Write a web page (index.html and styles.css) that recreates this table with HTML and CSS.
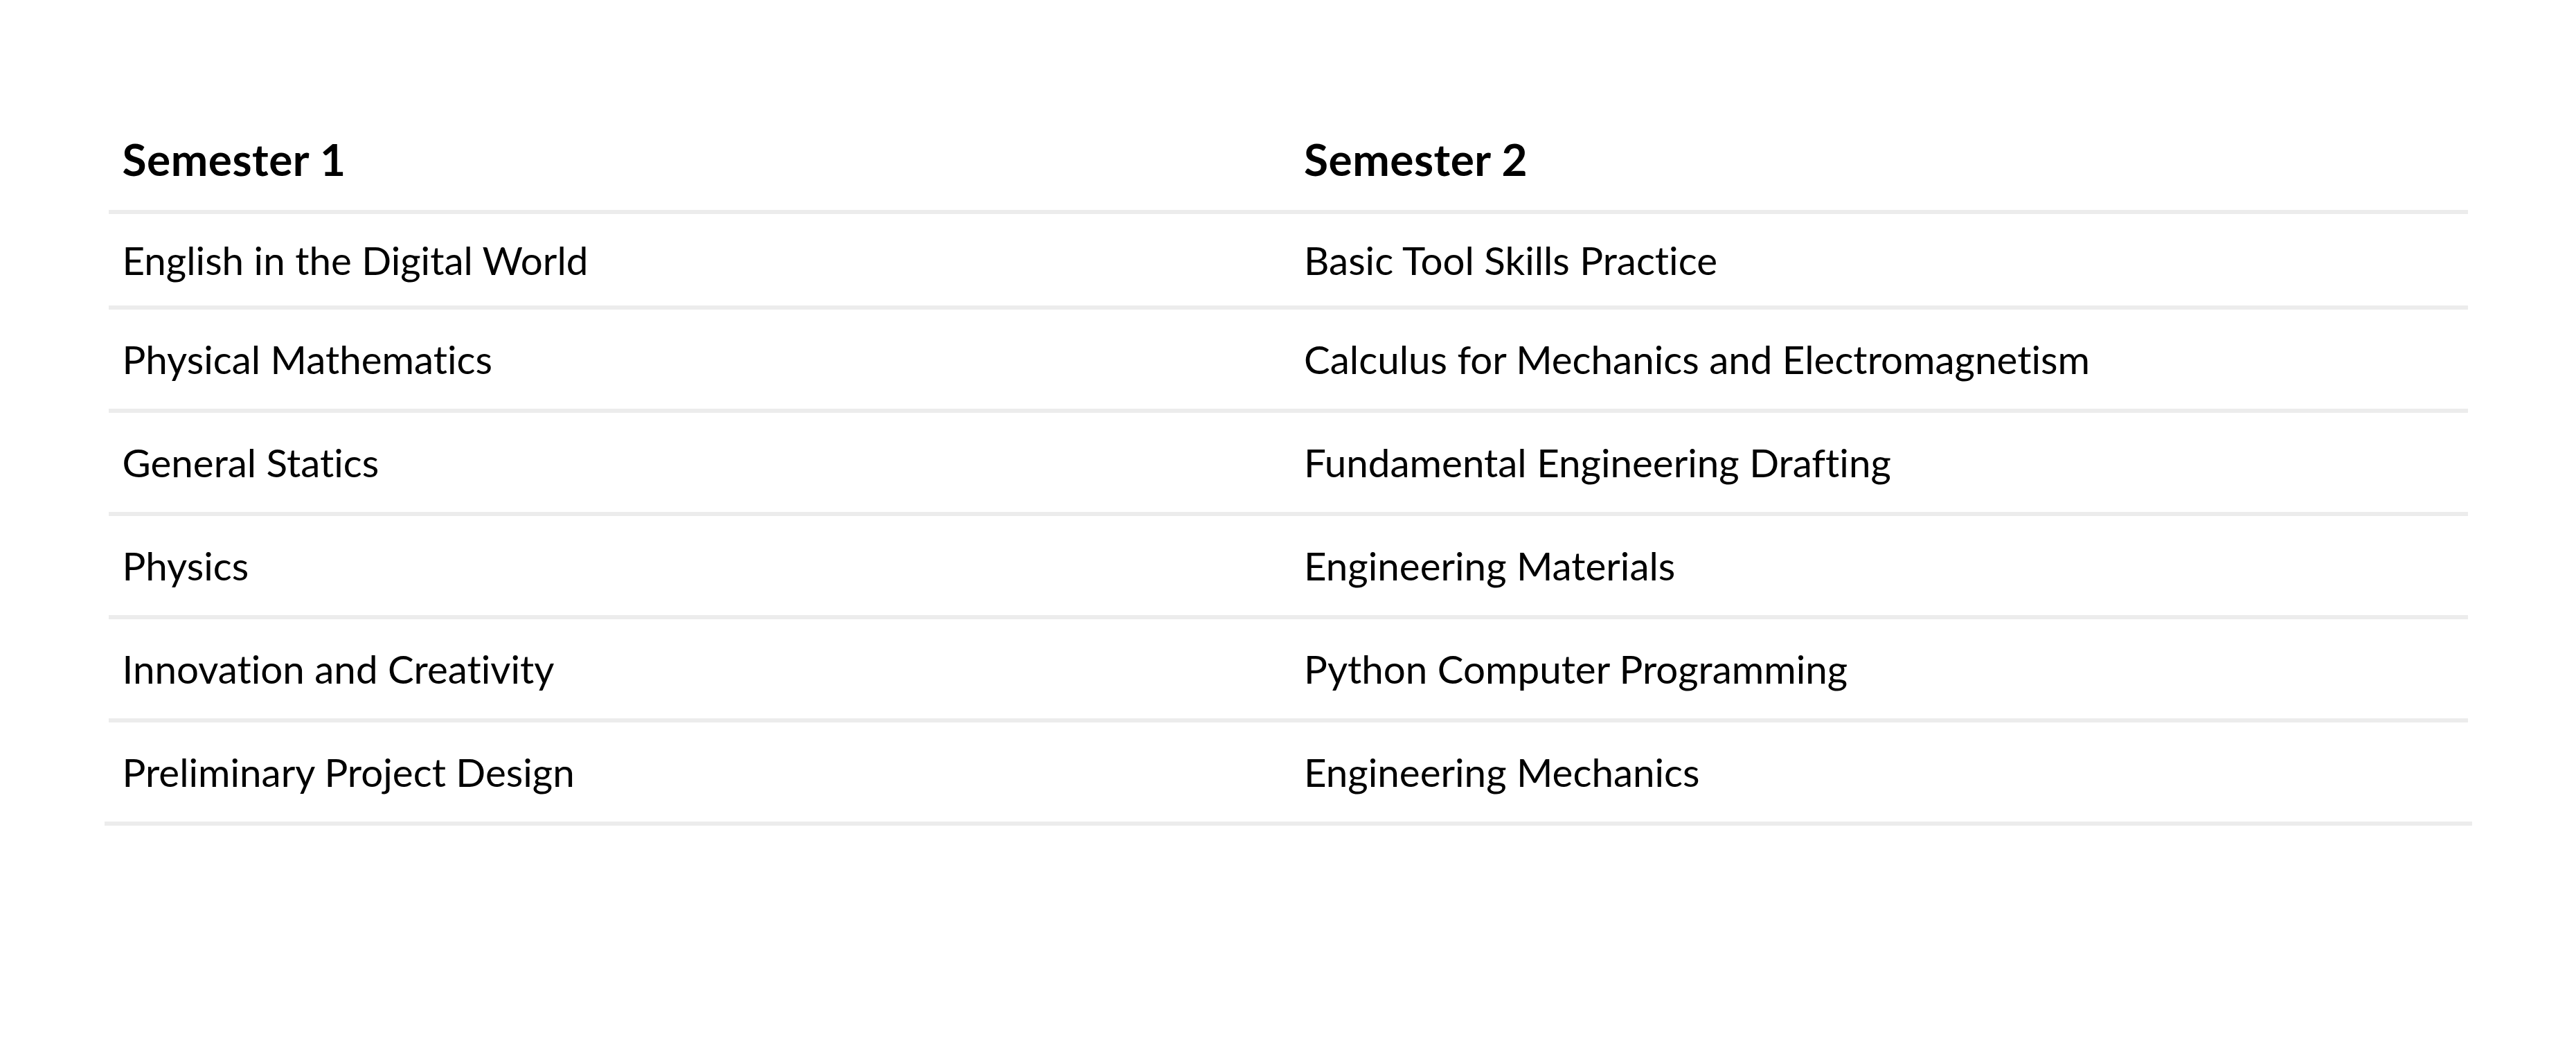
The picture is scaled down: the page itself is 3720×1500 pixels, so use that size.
FILE: index.html
```html
<!DOCTYPE html>
<html lang="en">
<head>
<meta charset="utf-8">
<title>Semesters</title>
<link rel="stylesheet" href="styles.css">
</head>
<body>
<div class="table">
  <div class="row head">
    <div class="cell">Semester 1</div>
    <div class="cell">Semester 2</div>
  </div>
  <div class="row first">
    <div class="cell">English in the Digital World</div>
    <div class="cell">Basic Tool Skills Practice</div>
  </div>
  <div class="row">
    <div class="cell">Physical Mathematics</div>
    <div class="cell">Calculus for Mechanics and Electromagnetism</div>
  </div>
  <div class="row">
    <div class="cell">General Statics</div>
    <div class="cell">Fundamental Engineering Drafting</div>
  </div>
  <div class="row">
    <div class="cell">Physics</div>
    <div class="cell">Engineering Materials</div>
  </div>
  <div class="row">
    <div class="cell">Innovation and Creativity</div>
    <div class="cell">Python Computer Programming</div>
  </div>
  <div class="row last">
    <div class="cell">Preliminary Project Design</div>
    <div class="cell">Engineering Mechanics</div>
  </div>
</div>
</body>
</html>
```

FILE: styles.css
```css
html, body {
  margin: 0;
  padding: 0;
  background: #ffffff;
}

body {
  font-family: Lato, "Open Sans", sans-serif;
  color: #000000;
  font-variant-ligatures: none;
  font-feature-settings: "liga" 0, "clig" 0;
}

.table {
  width: 3419px;
  margin: 155px auto 0;
  border-bottom: 6px solid #ececec;
}

.row {
  display: grid;
  grid-template-columns: 1fr 1fr;
  margin: 0 6px;
  border-bottom: 6px solid #ececec;
}

.row.last {
  border-bottom: none;
}

.cell {
  padding: 38px 20px 38px 20px;
  font-size: 56.5px;
  line-height: 67px;
  font-weight: 400;
  white-space: nowrap;
}

.row .cell + .cell {
  padding-left: 23px;
}

.row.head .cell {
  padding-top: 36px;
  padding-bottom: 35px;
  font-size: 64px;
  line-height: 77px;
  font-weight: 700;
  letter-spacing: 0.5px;
}

.row.first .cell {
  padding-top: 33px;
  padding-bottom: 32px;
}
```
